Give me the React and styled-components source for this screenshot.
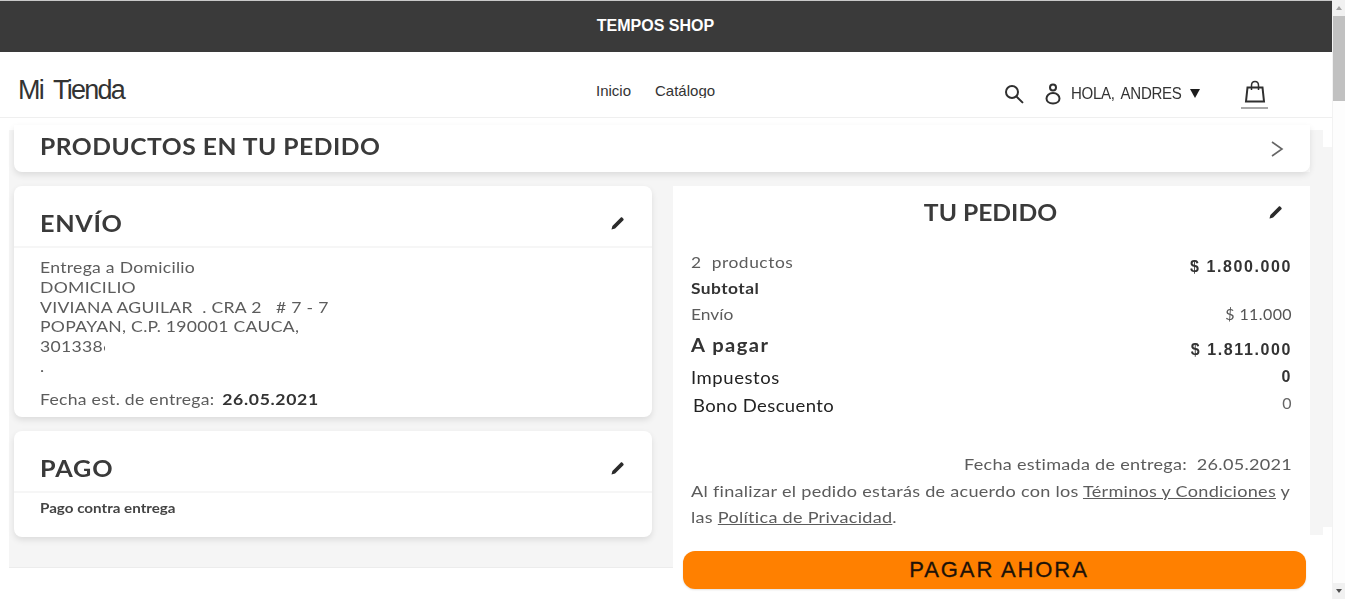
import React from 'react';
import styled, { createGlobalStyle } from 'styled-components';

const GlobalStyle = createGlobalStyle`
    html, body {
        margin: 0;
        height: 599px;
        overflow: hidden;
        background: #fff;
    }
`;

const Shell = styled.div`
    display: flex;
    height: 599px;
    font-family: 'Liberation Sans', Arial, sans-serif;
`;

const Page = styled.div`
    width: 1332px;
    overflow: hidden;
`;

const TopBar = styled.div`
    height: 52px;
    border-top: 1px solid #c8c8c8;
    background: #3a3a3a;
    color: #fff;
    font-size: 16px;
    font-weight: 700;
    display: flex;
    align-items: center;
    justify-content: center;
    padding: 0 668px 2px 647px;
    box-sizing: border-box;
    white-space: nowrap;
`;

const Header = styled.header`
    height: 66px;
    box-sizing: border-box;
    display: flex;
    align-items: center;
    padding-left: 18px;
    border-bottom: 1px solid #efefef;
    color: #333;
`;

const Logo = styled.div`
    width: 578px;
    font-size: 27px;
    letter-spacing: -1.8px;
    word-spacing: 5px;
    padding-top: 12px;
    flex: none;
`;

const Nav = styled.nav`
    display: flex;
    gap: 24px;
    font-size: 15px;
    padding-top: 11px;
    width: 408px;
    flex: none;
`;

const NavLink = styled.a`
    display: block;
    height: 15px;
    line-height: 16px;
    overflow: hidden;
`;

const Tools = styled.div`
    display: flex;
    align-items: center;
    padding-top: 18px;
`;

const UserName = styled.span`
    font-size: 16px;
    letter-spacing: -0.3px;
    word-spacing: 3px;
    margin-left: 9px;
    transform: scaleX(0.94);
    transform-origin: left center;
    width: 111px;
    white-space: nowrap;
`;

const Caret = styled.span`
    width: 0;
    height: 0;
    border-left: 5px solid transparent;
    border-right: 5px solid transparent;
    border-top: 9px solid #1c1c1c;
    margin-left: 8px;
`;

const BagButton = styled.div`
    margin-left: 41px;
    width: 27px;
    height: 30px;
    padding-top: 1px;
    border-bottom: 2px solid #a8a8a8;
    display: flex;
    justify-content: center;
    box-sizing: border-box;
`;

const Main = styled.main`
    height: 450px;
    margin-left: 9px;
    padding: 7px 22px 0 5px;
    box-sizing: border-box;
    background:
        linear-gradient(#ececec, #ececec) 0 449px / 664px 1px no-repeat,
        linear-gradient(#f5f5f5, #f5f5f5) 0 12px / 664px 437px no-repeat,
        linear-gradient(#f5f5f5, #f5f5f5) 664px 54px / 637px 14px no-repeat,
        linear-gradient(#f5f5f5, #f5f5f5) 1301px 12px / 13px 405px no-repeat,
        linear-gradient(#f5f5f5, #f5f5f5) 1314px 29px / 9px 380px no-repeat,
        #fff;
`;

const Card = styled.section`
    background: #fff;
    border-radius: 8px;
    box-shadow: ${(p) => (p.$flat ? 'none' : '0 3px 6px rgba(0, 0, 0, 0.1)')};
`;

const ProductsBar = styled(Card)`
    height: 47px;
    display: flex;
    align-items: center;
    justify-content: space-between;
    padding: 0 26px 0;
    border-radius: 0 0 8px 8px;
`;

const Columns = styled.div`
    display: grid;
    grid-template-columns: 638px 637px;
    column-gap: 21px;
    margin-top: 14px;
`;

const LeftColumn = styled.div`
    display: flex;
    flex-direction: column;
    gap: 14px;
`;

const CardHead = styled.div`
    height: 62px;
    padding: 14px 26px 0;
    box-sizing: border-box;
    display: flex;
    align-items: center;
    justify-content: space-between;
    border-bottom: 2px solid #f6f6f6;
`;

// the source text is a wide geometric face, Lato gets stretched to reach its widths
const Heading = styled.h2`
    margin: 0 0 ${(p) => p.$lift || 0}px;
    font-family: Lato, sans-serif;
    font-size: ${(p) => p.$size || 22.5}px;
    font-weight: 700;
    color: #3a3a3a;
    letter-spacing: ${(p) => p.$track || 0}px;
    transform: scaleX(1.12);
    transform-origin: ${(p) => (p.$centered ? 'center' : 'left center')};
    filter: blur(0.45px);
    white-space: nowrap;
`;

const Body = styled.div`
    padding: ${(p) => p.$pad}px 26px 0;
    height: ${(p) => p.$height}px;
    box-sizing: border-box;
    font-family: Lato, sans-serif;
    font-size: 16px;
    line-height: 19.8px;
    color: #5c5c5c;
    letter-spacing: 0.25px;
    transform: scaleX(1.1);
    transform-origin: 26px 0;
    filter: blur(0.45px);
`;

const Line = styled.div`
    white-space: pre;
`;

const ClippedPhone = styled.span`
    display: inline-block;
    width: 59px;
    overflow: hidden;
    vertical-align: bottom;
`;

const DeliveryLine = styled.div`
    margin-top: 13px;
    & > b {
        color: #333;
        letter-spacing: 0.6px;
        margin-left: 7px;
    }
`;

const PayLine = styled.div`
    font-size: 13.8px;
    font-weight: 700;
    color: #444;
    letter-spacing: 0;
`;

const OrderCard = styled(Card)`
    height: 420px;
    border-radius: 8px;
`;

const OrderHead = styled.div`
    height: 52px;
    padding: 0 20px 0 18px;
    display: flex;
    align-items: center;
    position: relative;
    justify-content: center;
`;

const OrderEdit = styled.span`
    position: absolute;
    right: 26px;
    top: 18px;
`;

const Summary = styled.div`
    padding: 14px 18px 0;
    font-family: Lato, sans-serif;
    color: #5c5c5c;
    filter: blur(0.45px);
`;

const Row = styled.div`
    display: flex;
    justify-content: space-between;
    align-items: flex-start;
    height: ${(p) => p.$height}px;
    line-height: 20px;
`;

const RowLabel = styled.div`
    font-size: ${(p) => p.$size || 15.5}px;
    font-weight: ${(p) => (p.$bold ? 700 : 400)};
    color: ${(p) => p.$color || '#5c5c5c'};
    letter-spacing: ${(p) => p.$track || 0}px;
    margin-left: ${(p) => p.$indent || 0}px;
    margin-top: ${(p) => p.$top || 0}px;
    transform: scaleX(1.12);
    transform-origin: left center;
    white-space: pre;
`;

const RowValue = styled.div`
    font-family: ${(p) => (p.$light ? 'Lato, sans-serif' : "'Liberation Sans', sans-serif")};
    font-size: 16px;
    font-weight: ${(p) => (p.$light ? 400 : 700)};
    color: ${(p) => p.$color || '#333'};
    letter-spacing: ${(p) => (p.$light ? 0.4 : 1.6)}px;
    margin-top: ${(p) => p.$drop || 0}px;
`;

const Note = styled.div`
    height: 26.5px;
    line-height: 26.5px;
    font-size: 16px;
    letter-spacing: 0.24px;
    white-space: pre;
    text-align: ${(p) => (p.$end ? 'right' : 'left')};
    transform: scaleX(1.13);
    transform-origin: ${(p) => (p.$end ? 'right' : 'left')} center;
    & > a {
        color: #5c5c5c;
        text-decoration: underline;
    }
`;

const PayFooter = styled.div`
    padding: 20px 4px 0 10px;
`;

const PayButton = styled.button`
    width: 100%;
    height: 38px;
    border: 0;
    border-radius: 12px;
    padding: 0 0 0 9px;
    background: #ff8000;
    color: #1d1208;
    font-family: 'Liberation Sans', sans-serif;
    font-size: 22px;
    letter-spacing: 1.9px;
    -webkit-text-stroke: 0.3px #1d1208;
    display: block;
    box-shadow: 0 1px 2px rgba(0, 0, 0, 0.12);
`;

const Scrollbar = styled.div`
    width: 13px;
    flex: none;
    box-sizing: border-box;
    border-left: 1px solid #f2f2f2;
    background: #fdfdfd;
    display: flex;
    flex-direction: column;
`;

const ScrollArrow = styled.div`
    height: 16px;
    background: #f1f1f1;
    display: flex;
    align-items: center;
    justify-content: center;
    &::after {
        content: '';
        border-left: 3.5px solid transparent;
        border-right: 3.5px solid transparent;
        ${(p) => (p.$down ? 'border-top: 4px solid #505050;' : 'border-bottom: 4px solid #a3a3a3;')}
    }
`;

const ScrollThumb = styled.div`
    height: 85px;
    background: #c1c1c1;
`;

const ScrollGap = styled.div`
    flex: 1;
`;

const Pencil = () => (
    <svg width="16" height="16" viewBox="0 0 16 16">
        <path d="M1.5 14.5l.9-3.6L10.6 2.7c.5-.5 1.2-.5 1.6-.1l1.2 1.2c.4.4.4 1.1 0 1.5L5.1 13.6z" fill="#2b2b2b" />
    </svg>
);

const SearchIcon = () => (
    <svg width="20" height="20" viewBox="0 0 20 20" fill="none" stroke="#2f2f2f" strokeWidth="2">
        <circle cx="8" cy="8" r="6" />
        <path d="M12.4 12.4l6 6" strokeLinecap="round" />
    </svg>
);

const UserIcon = () => (
    <svg width="18" height="22" viewBox="0 0 18 22" fill="none" stroke="#2f2f2f" strokeWidth="2" style={{ marginLeft: 20 }}>
        <circle cx="9" cy="4.5" r="3" />
        <path d="M9 10c-4 0-6.500 2.800-6.500 5.500S5 20.500 9 20.500s6.500-2.300 6.500-5S13 10 9 10z" />
    </svg>
);

const BagIcon = () => (
    <svg width="22" height="24" viewBox="0 0 22 24" fill="none" stroke="#2f2f2f" strokeWidth="2">
        <path d="M3.500 7.500h15l1.500 14H2z" />
        <path d="M7.500 10V5.500C7.500 3 9 1.500 11 1.500s3.500 1.500 3.500 4V10" strokeWidth="1.500" />
    </svg>
);

const Chevron = () => (
    <svg width="14" height="18" viewBox="0 0 14 18" fill="none" stroke="#666" strokeWidth="1.600">
        <path d="M2 2l10 7-10 7" />
    </svg>
);

const App = () => {
    return (
        <Shell>
            <GlobalStyle />
            <Page>
                <TopBar>TEMPOS SHOP</TopBar>
                <Header>
                    <Logo>Mi Tienda</Logo>
                    <Nav>
                        <NavLink>Inicio</NavLink>
                        <NavLink>Catálogo</NavLink>
                    </Nav>
                    <Tools>
                        <SearchIcon />
                        <UserIcon />
                        <UserName>HOLA, ANDRES</UserName>
                        <Caret />
                        <BagButton>
                            <BagIcon />
                        </BagButton>
                    </Tools>
                </Header>
                <Main>
                    <ProductsBar>
                        <Heading $size={22} $track={0.45} $lift={4}>PRODUCTOS EN TU PEDIDO</Heading>
                        <Chevron />
                    </ProductsBar>
                    <Columns>
                        <LeftColumn>
                            <Card>
                                <CardHead>
                                    <Heading $track={0.6}>ENVÍO</Heading>
                                    <Pencil />
                                </CardHead>
                                <Body $height={169} $pad={9}>
                                    <Line>Entrega a Domicilio</Line>
                                    <Line>DOMICILIO</Line>
                                    <Line>VIVIANA AGUILAR  . CRA 2   # 7 - 7</Line>
                                    <Line>POPAYAN, C.P. 190001 CAUCA,</Line>
                                    <Line><ClippedPhone>3013386</ClippedPhone></Line>
                                    <Line>.</Line>
                                    <DeliveryLine>Fecha est. de entrega:<b>26.05.2021</b></DeliveryLine>
                                </Body>
                            </Card>
                            <Card>
                                <CardHead>
                                    <Heading $track={0.8}>PAGO</Heading>
                                    <Pencil />
                                </CardHead>
                                <Body $height={44} $pad={5}>
                                    <PayLine>Pago contra entrega</PayLine>
                                </Body>
                            </Card>
                        </LeftColumn>
                        <OrderCard $flat>
                            <OrderHead>
                                <Heading $size={22} $centered>TU PEDIDO</Heading>
                                <OrderEdit><Pencil /></OrderEdit>
                            </OrderHead>
                            <Summary>
                                <Row $height={52}>
                                    <div>
                                        <RowLabel $track={0.5}>2  productos</RowLabel>
                                        <RowLabel $bold $color="#333" $track={0.4} $top={6}>Subtotal</RowLabel>
                                    </div>
                                    <RowValue $drop={5}>$ 1.800.000</RowValue>
                                </Row>
                                <Row $height={31}>
                                    <RowLabel>Envío</RowLabel>
                                    <RowValue $light $color="#555">$ 11.000</RowValue>
                                </Row>
                                <Row $height={32}>
                                    <RowLabel $bold $size={18} $track={1.3} $color="#333">A pagar</RowLabel>
                                    <RowValue $drop={5}>$ 1.811.000</RowValue>
                                </Row>
                                <Row $height={29}>
                                    <RowLabel $size={16.5} $track={0.5} $color="#222" $top={1}>Impuestos</RowLabel>
                                    <RowValue>0</RowValue>
                                </Row>
                                <Row $height={55}>
                                    <RowLabel $size={16.5} $track={0.35} $color="#222" $indent={2}>Bono Descuento</RowLabel>
                                    <RowValue $light $color="#666" $drop={-3}>0</RowValue>
                                </Row>
                                <Note $end>Fecha estimada de entrega:  26.05.2021</Note>
                                <Note>Al finalizar el pedido estarás de acuerdo con los <a>Términos y Condiciones</a> y</Note>
                                <Note>las <a>Política de Privacidad</a>.</Note>
                            </Summary>
                            <PayFooter>
                                <PayButton>PAGAR AHORA</PayButton>
                            </PayFooter>
                        </OrderCard>
                    </Columns>
                </Main>
            </Page>
            <Scrollbar>
                <ScrollArrow />
                <ScrollThumb />
                <ScrollGap />
                <ScrollArrow $down />
            </Scrollbar>
        </Shell>
    );
};

export default App;
